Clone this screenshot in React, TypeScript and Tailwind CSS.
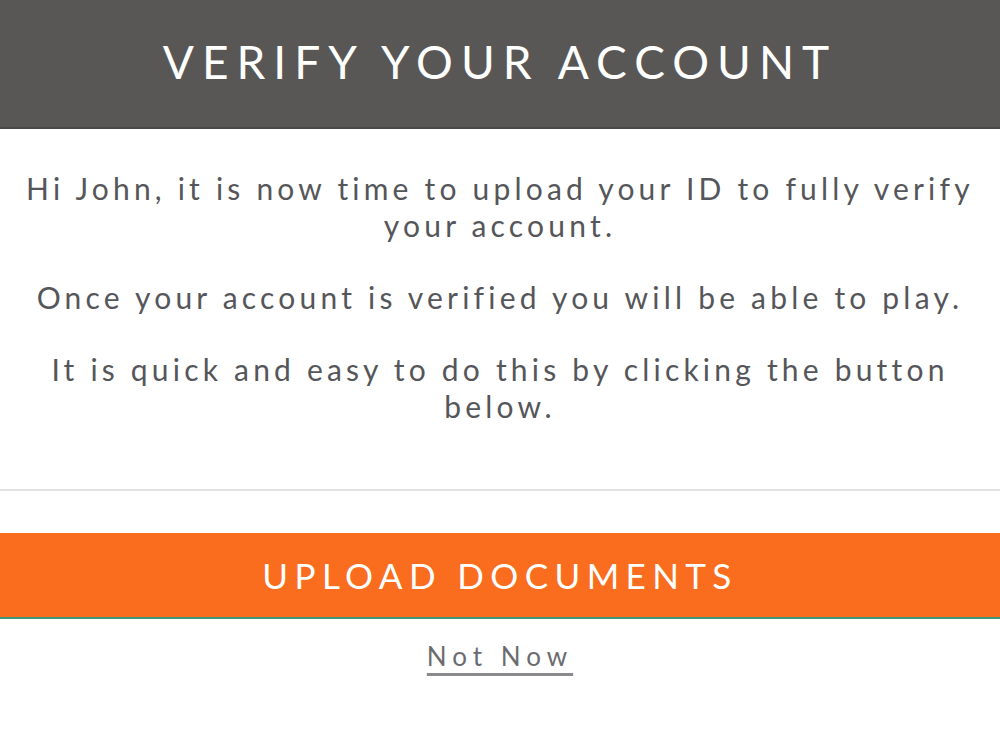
export default function App() {
  return (
    <div className="w-[1000px] h-[730px] bg-white font-['Lato',sans-serif] overflow-hidden">
      {/* Header */}
      <div className="h-[129px] bg-[#585756] border-b-2 border-[#4a4948] flex items-center justify-center">
        <h1 className="text-[46px] leading-none text-white tracking-[8px] pb-1">
          VERIFY YOUR ACCOUNT
        </h1>
      </div>

      {/* Message */}
      <div className="pt-[41px] px-2 text-center text-[#55565a] text-[30px] leading-[37px] tracking-[4.2px] flex flex-col gap-[35px]">
        <p>
          Hi John, it is now time to upload your ID to fully verify
          <br />
          your account.
        </p>
        <p>Once your account is verified you will be able to play.</p>
        <p>
          It is quick and easy to do this by clicking the button
          <br />
          below.
        </p>
      </div>

      <div className="mt-[64px] h-[2px] bg-[#e2e2e2]" />

      {/* Actions */}
      <div className="pt-[42px] flex flex-col items-center">
        <button className="w-full h-[86px] bg-[#fa6d1e] border-b-2 border-[#3b9a74] text-white text-[35px] tracking-[6.4px] flex items-center justify-center">
          UPLOAD DOCUMENTS
        </button>
        <a href="#" className="mt-[22px] text-[26px] leading-[30px] tracking-[6px] text-[#6b6b70] underline underline-offset-[7px] decoration-[3px] decoration-[#8a8a8e]">
          Not Now
        </a>
      </div>
    </div>
  );
}
